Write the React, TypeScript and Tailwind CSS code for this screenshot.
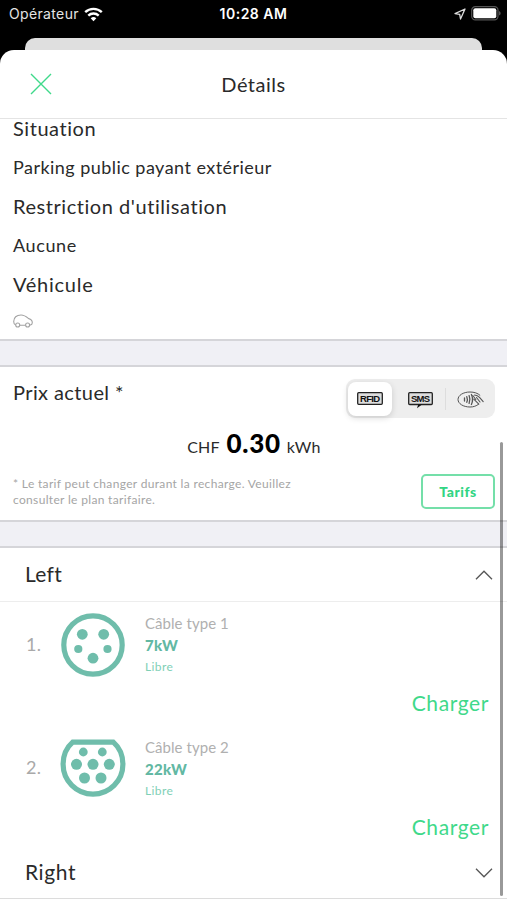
import { useState } from "react";

interface Connector {
  id: number;
  cable: string;
  power: string;
  status: string;
  type: "type1" | "type2";
}

const connectors: Connector[] = [
  { id: 1, cable: "Câble type 1", power: "7kW", status: "Libre", type: "type1" },
  { id: 2, cable: "Câble type 2", power: "22kW", status: "Libre", type: "type2" },
];

function StatusBar() {
  return (
    <div className="grid h-[38px] grid-cols-3 items-start px-[9px] pt-1 font-['Inter'] text-[14px] leading-5 text-white">
      <div className="flex items-center gap-[5px]">
        <span className="tracking-[0.35px] text-[#e4e4e4]">Opérateur</span>
        <svg className="h-[15px] w-[19px]" viewBox="0 0 19 15" fill="none" stroke="#fff" strokeWidth="2.4">
          <path d="M1.2 5.2a12 12 0 0 1 16.6 0" />
          <path d="M4.3 8.6a7.6 7.6 0 0 1 10.4 0" />
          <path d="M9.5 14.3 6.7 11.3a4.2 4.2 0 0 1 5.6 0z" fill="#fff" stroke="none" />
        </svg>
      </div>
      <span className="text-center font-semibold tracking-[0.5px] whitespace-nowrap">10:28 AM</span>
      <div className="-mr-[3px] flex h-[19px] items-center justify-end gap-[5px]">
        <svg className="h-3 w-3" viewBox="0 0 12 12" fill="none" stroke="#ddd" strokeWidth="1.3" strokeLinejoin="round">
          <path d="M11 1 1 5.6l4.7.7.8 4.7z" />
        </svg>
        <svg className="h-[15px] w-[30px]" viewBox="0 0 30 15" fill="none">
          <rect x="0.7" y="0.7" width="26.3" height="13.2" rx="3.6" stroke="#555" strokeWidth="1.2" />
          <rect x="2.3" y="2.3" width="23" height="10" rx="2" fill="#fff" />
          <path d="M28.3 5v4.6c1.6-.8 1.6-3.8 0-4.6z" fill="#777" />
        </svg>
      </div>
    </div>
  );
}

function CarIcon() {
  return (
    <svg className="h-[14px] w-5" viewBox="0 0 20 14" fill="none" stroke="#a3a3a3" strokeWidth="1.1">
      <path d="M2.6 11C1 10.5.7 9.5.7 7.500.7 3.500 3.500 1 8 1c3.300 0 5.200 1.500 7.700 3.600 2.600.7 3.600 2 3.600 4.100 0 1.500-.6 2.100-2.200 2.400M6.800 11.300h5.700" />
      <circle cx="4.7" cy="11" r="2" />
      <circle cx="14.6" cy="11" r="2" />
    </svg>
  );
}

function SmsIcon() {
  return (
    <svg className="h-[17px] w-[25px]" viewBox="0 0 25 17">
      <rect x="0.7" y="0.7" width="23.6" height="11.8" rx="1" fill="#ddd" stroke="#222" strokeWidth="1.3" />
      <path d="M8.5 12.5H14l-5 3.700 1.200-3.700z" fill="#111" />
      <text x="12.5" y="10" textAnchor="middle" textLength="19" fill="#111" className="font-['Liberation_Sans'] text-[9.5px] font-bold">
        SMS
      </text>
    </svg>
  );
}

function ContactlessIcon() {
  return (
    <svg className="h-[17px] w-7" viewBox="0 0 28 17" fill="none" stroke="#555" strokeLinecap="round">
      <path d="M21.5 13.3C19.3 15 16.5 16 13 16 6.200 16 1 12.600 1 8.500S6.200 1 13 1c4.200 0 7.800 1.200 9.900 3.200" strokeWidth="1" />
      <path d="M7.5 7v3M9.800 5.700c.7 1.800.7 3.800 0 5.600M12.100 4.600c1.100 2.500 1.100 5.300 0 7.800M14.400 3.500c1.500 3.200 1.500 6.800 0 10" strokeWidth="1.3" />
      <path d="m15.800 4.500 3 4M17.500 4c2 .3 3.600 1 5 2.300l3.700 4.300M16.800 8.200l5 5M19.500 6.500l3.500 4.500" strokeWidth="1.1" />
    </svg>
  );
}

function PlugIcon({ type }: { type: Connector["type"] }) {
  if (type === "type1") {
    return (
      <svg className="h-16 w-[66px]" viewBox="0 0 66 64" fill="#6fbdab">
        <circle cx="33" cy="32" r="29.2" fill="none" stroke="#6fbdab" strokeWidth="5.2" />
        <circle cx="22.3" cy="21.3" r="5.4" />
        <circle cx="43.7" cy="21.3" r="5.4" />
        <circle cx="18.3" cy="36" r="4.1" />
        <circle cx="47.5" cy="36" r="4.1" />
        <circle cx="33" cy="45.2" r="5.4" />
      </svg>
    );
  }
  return (
    <svg className="mb-[2px] h-[58px] w-[66px]" viewBox="0 0 66 58" fill="#6fbdab">
      <path
        d="M12.7 3.100h40.600C59.500 8.500 62.900 16 62.900 25.300a29.900 29.900 0 0 1-59.800 0C3.100 16 6.500 8.500 12.700 3.100z"
        fill="none"
        stroke="#6fbdab"
        strokeWidth="5.2"
      />
      <circle cx="23.3" cy="13" r="4.4" />
      <circle cx="42.3" cy="13" r="4.4" />
      <circle cx="16.5" cy="25.3" r="5.5" />
      <circle cx="33" cy="25.3" r="5.5" />
      <circle cx="49.3" cy="25.3" r="5.5" />
      <circle cx="24.5" cy="39" r="5.5" />
      <circle cx="41" cy="39" r="5.5" />
    </svg>
  );
}

function Chevron({ open }: { open: boolean }) {
  return (
    <svg className="h-[10px] w-[18px]" viewBox="0 0 18 10" fill="none" stroke="#555" strokeWidth="1.3">
      <path d={open ? "M1 9.2 9 1.2l8 8" : "M1 .8l8 8 8-8"} />
    </svg>
  );
}

function ConnectorRow({ connector }: { connector: Connector }) {
  return (
    <li className="h-[123.5px] pt-[11px]">
      <div className="flex h-16 items-center">
        <span className="w-[60px] pb-[2px] pl-[26px] text-[18px] tracking-[0.3px] text-[#a9a9a9]">{connector.id}.</span>
        <PlugIcon type={connector.type} />
        <div className="pb-px pl-[19px]">
          <p className="text-[15px] leading-[22px] tracking-[0.05px] text-[#b0b0b0]">{connector.cable}</p>
          <p className="text-[15px] leading-[23px] font-black tracking-[0.3px] text-[#62b8a3]">{connector.power}</p>
          <p className="text-[12px] leading-5 tracking-[0.4px] text-[#7fd0b6]">{connector.status}</p>
        </div>
      </div>
      <div className="flex justify-end pt-[11px] pr-[18px]">
        <button className="text-[21px] leading-[30px] tracking-[0.6px] text-[#3fd98a]">Charger</button>
      </div>
    </li>
  );
}

export default function App() {
  const [leftOpen, setLeftOpen] = useState(true);
  const [method, setMethod] = useState("rfid");

  return (
    <div className="relative h-[900px] w-[507px] overflow-hidden bg-black font-['Lato',sans-serif] text-[#2a2a2a]">
      <StatusBar />
      <div className="mx-[25px] h-3 rounded-t-[10px] bg-[#dfdfdf]" />

      <main className="h-[850px] rounded-t-[14px] bg-white">
        <header className="grid h-[69px] grid-cols-3 items-center border-b border-[#e4e4e4]">
          <button className="pl-[30px]" aria-label="Fermer">
            <svg className="h-[22px] w-[22px]" viewBox="0 0 22 22" stroke="#3fd98a" strokeWidth="1.4">
              <path d="m1 1 20 20M21 1 1 21" />
            </svg>
          </button>
          <h1 className="pb-px text-center text-[20px] tracking-[0.5px]">Détails</h1>
        </header>

        {/* Informations */}
        <section className="-mt-[10px] h-[230px] px-[13px]">
          <h2 className="text-[20px] leading-[39px] tracking-[0.55px]">Situation</h2>
          <p className="text-[18px] leading-[39px] tracking-[0.46px]">Parking public payant extérieur</p>
          <h2 className="text-[20px] leading-[39px] tracking-[0.55px]">Restriction d'utilisation</h2>
          <p className="text-[18px] leading-[39px] tracking-[0.6px]">Aucune</p>
          <h2 className="text-[20px] leading-[39px] tracking-[0.75px]">Véhicule</h2>
          <div className="pt-[10px]">
            <CarIcon />
          </div>
        </section>

        <div className="h-7 border-y-2 border-[#d5d5d9] bg-[#f0f0f5]" />

        {/* Prix */}
        <section className="h-[153px] pr-3 pl-[13px]">
          <div className="flex h-[63px] items-start justify-between pt-3">
            <h2 className="-mt-px text-[20px] leading-[28px] tracking-[0.4px]">Prix actuel *</h2>
            <div className="flex h-[39px] w-[149px] items-center rounded-[9px] bg-[#eeeeee]">
              <button
                onClick={() => setMethod("rfid")}
                className={`ml-[2px] flex h-[34px] w-11 items-center justify-center rounded-[8px] ${method === "rfid" ? "bg-white shadow-[0_2px_6px_rgba(0,0,0,0.15)]" : ""}`}
              >
                <svg className="h-[13px] w-[26px]" viewBox="0 0 26 13">
                  <rect x="0.7" y="0.7" width="24.6" height="11.6" rx="1" fill="#ddd" stroke="#222" strokeWidth="1.3" />
                  <text x="13" y="9.8" textAnchor="middle" textLength="20" fill="#111" className="font-['Liberation_Sans'] text-[9.5px] font-bold">
                    RFID
                  </text>
                </svg>
              </button>
              <button
                onClick={() => setMethod("sms")}
                className="flex h-[34px] flex-1 items-center justify-center pt-1 pl-1"
              >
                <SmsIcon />
              </button>
              <div className="h-[22px] w-px bg-[#dddddd]" />
              <button
                onClick={() => setMethod("nfc")}
                className="flex h-[34px] w-[49px] items-center justify-center pt-[2px]"
              >
                <ContactlessIcon />
              </button>
            </div>
          </div>

          <p className="-mt-[5px] flex h-[41px] items-baseline justify-center leading-9">
            <span className="text-[16px] tracking-[0.1px]">CHF</span>
            <span className="pr-[6px] pl-[7px] text-[26px] font-black tracking-[0.7px] text-black">0.30</span>
            <span className="text-[16px] tracking-[0.2px]">kWh</span>
          </p>

          <div className="flex items-start justify-between pt-2">
            <p className="w-[290px] pt-[2px] text-[12px] leading-[16px] tracking-[0.33px] text-[#a5a5a5]">
              * Le tarif peut changer durant la recharge. Veuillez
              <br />
              consulter le plan tarifaire.
            </p>
            <button className="h-[35px] w-[74px] rounded-[5px] border-2 border-[#74dfa9] pb-px text-[14px] font-black tracking-[0.5px] text-[#32d583]">
              Tarifs
            </button>
          </div>
        </section>

        <div className="h-7 border-y-2 border-[#d5d5d9] bg-[#f0f0f5]" />

        {/* Bornes */}
        <section>
          <button
            onClick={() => setLeftOpen(!leftOpen)}
            className="flex h-[54px] w-full items-center justify-between border-b border-[#ededed] pr-[14px] pl-[25px]"
          >
            <span className="pb-px text-[21px] tracking-[0.3px]">Left</span>
            <Chevron open={leftOpen} />
          </button>
          {leftOpen && (
            <ul>
              {connectors.map((connector) => (
                <ConnectorRow key={connector.id} connector={connector} />
              ))}
            </ul>
          )}
          <button className="flex h-[50px] w-full items-center justify-between border-b border-[#dcdcdc] pr-[14px] pl-[25px]">
            <span className="pb-[3px] text-[21px] tracking-[0.6px]">Right</span>
            <span className="pb-[2px]">
              <Chevron open={false} />
            </span>
          </button>
        </section>
      </main>

      {/* Scroll indicator */}
      <div className="absolute top-[442px] right-1 h-[454px] w-[3px] rounded-full bg-black/40" />
    </div>
  );
}
